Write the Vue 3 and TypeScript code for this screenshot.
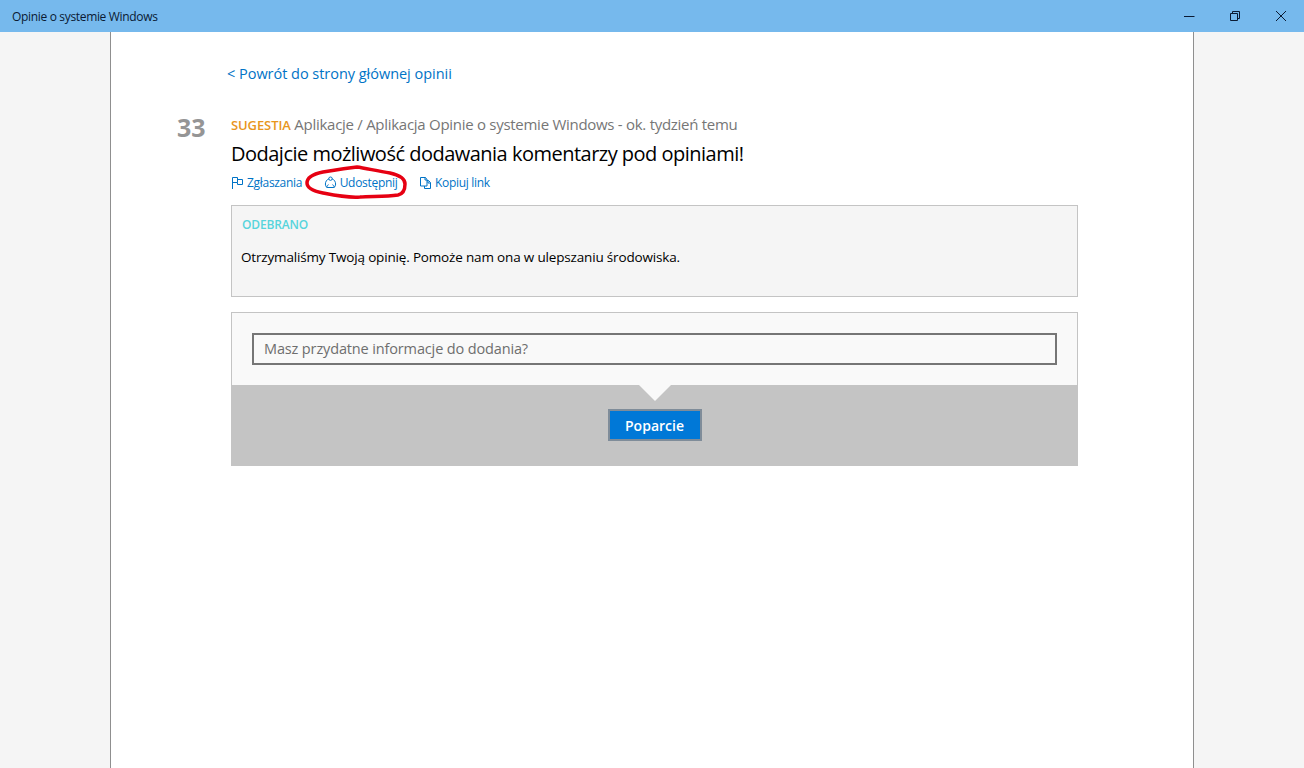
<script setup lang="ts">
const title = 'Opinie o systemie Windows'
</script>

<template>
  <div class="window">
    <header class="titlebar">
      <span class="app-title">{{ title }}</span>
      <div class="controls">
        <button class="ctl" aria-label="Minimalizuj">
          <svg width="12" height="12" viewBox="0 0 12 12"><path d="M1 6.500h10.500" stroke="#0a1a33" fill="none" /></svg>
        </button>
        <button class="ctl" aria-label="Przywróć">
          <svg width="12" height="12" viewBox="0 0 12 12"><path d="M1.500 3.500h7v7h-7zM3.500 3.500v-2h7v7h-2" stroke="#0a1a33" fill="none" /></svg>
        </button>
        <button class="ctl" aria-label="Zamknij">
          <svg width="12" height="12" viewBox="0 0 12 12"><path d="M1 1l10 10M11 1L1 11" stroke="#0a1a33" fill="none" /></svg>
        </button>
      </div>
    </header>
    <main class="sheet">
      <a class="back">&lt; Powrót do strony głównej opinii</a>
      <section class="feedback">
        <div class="score">33</div>
        <div class="body">
          <p class="meta"><b class="kind">SUGESTIA</b> Aplikacje / Aplikacja Opinie o systemie Windows - ok. tydzień temu</p>
          <h1 class="headline">Dodajcie możliwość dodawania komentarzy pod opiniami!</h1>
          <div class="actions">
            <a class="action">
              <svg width="13" height="13" viewBox="0 0 13 13"><path d="M1.500 13V1.500h5v5h-5M6.500 3.500h5v5h-5v-2" stroke="#0073c6" fill="none" /></svg>
              Zgłaszania
            </a>
            <a class="action share">
              <svg width="13" height="13" viewBox="0 0 13 13" fill="none" stroke="#0073c6"><circle cx="6.500" cy="2.700" r="1.700" /><path d="M4.900 2.800C2.700 3.700 1.400 5.700 1.400 8c0 2.600 1 3.500 2.600 3.500h5c1.600 0 2.600-.9 2.600-3.500 0-2.300-1.300-4.300-3.500-5.200" /><path d="M3 11.500c-.3-1.300.3-2.500 1.600-2.800M10 11.500c.3-1.300-.3-2.500-1.600-2.800" /></svg>
              Udostępnij
              <svg class="scribble" width="102" height="35" viewBox="0 0 102 35"><path d="M52 2C60 3 72 6 85 8C94 10 100 13 100 19C100 25 98 29 93 30C80 32 65 31 55 32C42 33 28 30 18 28C8 26 2 23 2 18C2 13 8 9 18 7C30 5 42 3 52 2Z" stroke="#e60012" stroke-width="3.500" fill="none" /></svg>
            </a>
            <a class="action">
              <svg width="13" height="13" viewBox="0 0 13 13" fill="none" stroke="#0073c6"><path d="M1.500 1.500h5l1.500 2v6.500h-6.500zM6 1.500v2.500h2M8 4.500h1.500l2 2v6h-6v-2.500M9 4.500v2.500h2.500" /></svg>
              Kopiuj link
            </a>
          </div>
          <div class="status">
            <div class="status-name">ODEBRANO</div>
            <p class="status-text">Otrzymaliśmy Twoją opinię. Pomoże nam ona w ulepszaniu środowiska.</p>
          </div>
          <div class="vote">
            <div class="vote-top">
              <div class="field">Masz przydatne informacje do dodania?</div>
            </div>
            <div class="vote-bottom">
              <span class="notch"></span>
              <button class="support">Poparcie</button>
            </div>
          </div>
        </div>
      </section>
    </main>
  </div>
</template>

<style>
html, body { margin: 0; background: #f5f5f5; overflow: hidden; }
</style>

<style scoped>
.window {
  height: 768px;
  display: flex;
  flex-direction: column;
  overflow: hidden;
  font-family: "Open Sans", "Noto Sans", "Liberation Sans", sans-serif;
  background: #f5f5f5;
}
.titlebar {
  height: 32px;
  flex: none;
  background: #76b9ed;
  display: flex;
  align-items: center;
  justify-content: space-between;
}
.app-title {
  margin-left: 12px;
  font-size: 12px;
  letter-spacing: -0.33px;
  color: #0a1a33;
}
.controls { display: flex; }
.ctl {
  width: 46px;
  height: 32px;
  padding: 0;
  border: 0;
  background: none;
  display: flex;
  align-items: center;
  justify-content: center;
}
.sheet {
  flex: 1;
  box-sizing: border-box;
  width: 1084px;
  margin-left: 110px;
  background: #fff;
  border-left: 1px solid #8f8f8f;
  border-right: 1px solid #8f8f8f;
  padding: 30px 0 0 116px;
}
.back {
  display: block;
  height: 24px;
  font-size: 14.500px;
  line-height: 24px;
  letter-spacing: -0.03px;
  color: #0073c6;
}
.feedback {
  position: relative;
  margin-top: 28px;
  margin-left: 4px;
  width: 847px;
}
.score {
  position: absolute;
  left: -54px;
  top: -4px;
  font-size: 25px;
  line-height: 34px;
  font-weight: 700;
  color: #959595;
}
.meta {
  margin: 0;
  font-size: 15px;
  line-height: 20px;
  letter-spacing: -0.28px;
  color: #767676;
}
.kind {
  font-size: 13px;
  font-weight: 600;
  letter-spacing: -0.1px;
  color: #e8961e;
}
.headline {
  margin: 5px 0 0;
  font-size: 20px;
  line-height: 28px;
  font-weight: 400;
  letter-spacing: -0.51px;
  color: #000;
}
.actions {
  margin-top: 4px;
  height: 20px;
  display: flex;
  align-items: center;
  gap: 21.500px;
}
.action {
  position: relative;
  display: flex;
  align-items: center;
  gap: 3px;
  font-size: 12px;
  letter-spacing: -0.3px;
  color: #0073c6;
}
.scribble {
  position: absolute;
  left: -19px;
  top: -9px;
  pointer-events: none;
}
.status {
  box-sizing: border-box;
  height: 92px;
  margin-top: 13px;
  padding: 10px 9px;
  background: #f5f5f5;
  border: 1px solid #c4c4c4;
}
.status-name {
  margin-left: 1px;
  font-size: 12px;
  line-height: 18px;
  font-weight: 600;
  letter-spacing: -0.15px;
  color: #57d4dc;
}
.status-text {
  margin: 14px 0 0;
  font-size: 13.500px;
  line-height: 18px;
  letter-spacing: -0.17px;
  color: #000;
}
.vote {
  margin-top: 15px;
  background: #f9f9f9;
}
.vote-top {
  box-sizing: border-box;
  height: 73px;
  padding: 20px 20px 0;
  border: 1px solid #c4c4c4;
  border-bottom: 0;
}
.field {
  box-sizing: border-box;
  height: 32px;
  padding-left: 10px;
  border: 2px solid #767676;
  font-size: 14.500px;
  line-height: 28px;
  letter-spacing: -0.14px;
  color: #6e6e6e;
}
.vote-bottom {
  position: relative;
  height: 81px;
  background: #c4c4c4;
  display: flex;
  justify-content: center;
  padding-top: 24px;
  box-sizing: border-box;
}
.notch {
  position: absolute;
  top: 0;
  left: 50%;
  margin-left: -16px;
  border-left: 16px solid transparent;
  border-right: 16px solid transparent;
  border-top: 16px solid #f9f9f9;
}
.support {
  width: 94px;
  height: 32px;
  padding: 0;
  background: #0078d7;
  border: 2px solid #7f8c99;
  color: #fff;
  font-family: inherit;
  font-size: 14px;
  font-weight: 600;
  letter-spacing: 0;
}
</style>
